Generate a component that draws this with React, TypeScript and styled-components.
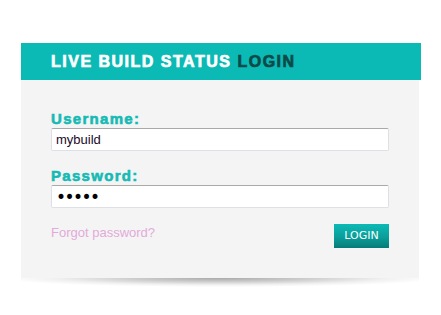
import React from "react";
import styled, { createGlobalStyle } from "styled-components";

const Global = createGlobalStyle`
  html, body { margin: 0; padding: 0; background: #ffffff; }
  body { font-family: "Liberation Sans", Arial, sans-serif; }
`;

const Page = styled.div`
  padding: 43px 0 0 21px;
`;

const Card = styled.div`
  width: 400px;
`;

const Header = styled.div`
  height: 37px;
  background: #0bbab5;
  padding-left: 30px;
  font-family: "Liberation Sans", Arial, sans-serif;
  font-weight: 700;
  font-size: 16px;
  line-height: 37px;
  letter-spacing: 1.5px;
  color: #ffffff;
  -webkit-text-stroke: 0.7px currentColor;
  white-space: nowrap;
`;

const Accent = styled.span`
  color: #0b4a48;
`;

const Panel = styled.div`
  width: 398px;
  height: 198px;
  box-sizing: border-box;
  background: #f4f4f4;
  padding: 30px 30px 0 30px;
`;

const Shadow = styled.div`
  width: 398px;
  height: 9px;
  background: radial-gradient(
    ellipse 55% 100% at 50% 0%,
    rgba(0, 0, 0, 0.34) 0%,
    rgba(0, 0, 0, 0.2) 40%,
    rgba(0, 0, 0, 0.06) 75%,
    rgba(0, 0, 0, 0) 100%
  );
`;

const Label = styled.label<{ $gap?: number }>`
  display: block;
  margin-top: ${(p) => p.$gap ?? 0}px;
  font-family: "Liberation Sans", Arial, sans-serif;
  font-weight: 700;
  font-size: 15px;
  line-height: 18px;
  letter-spacing: 1.3px;
  color: #16bab4;
  -webkit-text-stroke: 0.6px currentColor;
`;

const Field = styled.input`
  display: block;
  width: 338px;
  height: 23px;
  box-sizing: border-box;
  margin: 0;
  padding: 0 4px;
  border: 1px solid #dde0e6;
  border-top-color: #a9a9a9;
  border-radius: 2px;
  background: #ffffff;
  font-family: "Liberation Sans", Arial, sans-serif;
  font-size: 13px;
  color: #1a0a2a;
  outline: none;
  &[type="password"] {
    font-family: "DejaVu Sans", sans-serif;
    font-size: 17px;
    letter-spacing: -1.5px;
    color: #000;
  }
`;

const Actions = styled.div`
  display: flex;
  justify-content: space-between;
  align-items: flex-start;
  margin-top: 16px;
`;

const Forgot = styled.a`
  margin-top: 1px;
  font-family: "Liberation Sans", Arial, sans-serif;
  font-size: 13px;
  line-height: 15px;
  color: #e3aad9;
  text-decoration: none;
`;

const Button = styled.button`
  width: 55px;
  height: 24px;
  margin: 0;
  padding: 0;
  border: none;
  background: linear-gradient(to bottom, #0bbab5 0%, #0a9e9a 55%, #067b78 100%);
  color: #ffffff;
  font-family: "DejaVu Sans", Tahoma, sans-serif;
  font-size: 11px;
  line-height: 24px;
  cursor: pointer;
`;

export default function App() {
  return (
    <>
      <Global />
      <Page>
        <Card>
          <Header>
            LIVE BUILD STATUS <Accent>LOGIN</Accent>
          </Header>
          <Panel>
            <Label htmlFor="user">Username:</Label>
            <Field id="user" type="text" defaultValue="mybuild" />
            <Label htmlFor="pass" $gap={16}>Password:</Label>
            <Field id="pass" type="password" defaultValue="build" />
            <Actions>
              <Forgot href="#">Forgot password?</Forgot>
              <Button type="button">LOGIN</Button>
            </Actions>
          </Panel>
          <Shadow />
        </Card>
      </Page>
    </>
  );
}
